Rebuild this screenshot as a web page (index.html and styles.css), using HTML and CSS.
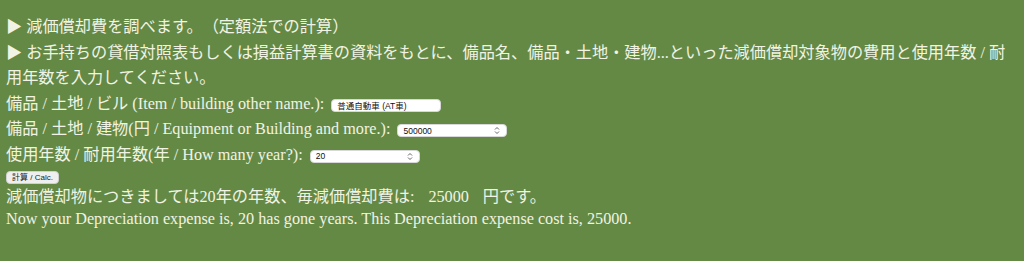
FILE: index.html
```html
<html lang="ja">
<head>
    <meta charset="UTF-8">
    <meta name="viewport" content="width=device-width, initial-scale=1.0">
    <title>減価償却費の計算</title>
    <link rel="stylesheet" href="styles.css">
</head>
<body>
    <div class="page">
        <p class="lead">▶ 減価償却費を調べます。（定額法での計算）</p>
        <p class="lead">▶ お手持ちの貸借対照表もしくは損益計算書の資料をもとに、備品名、備品・土地・建物...といった減価償却対象物の費用と使用年数 / 耐用年数を入力してください。</p>

        <div class="field">
            <label for="name">備品 / 土地 / ビル (Item / building other name.):</label>
            <input id="name" class="box" type="text" value="普通自動車 (AT車)">
        </div>
        <div class="field">
            <label for="cost">備品 / 土地 / 建物(円 / Equipment or Building and more.):</label>
            <span class="spin">
                <input id="cost" class="box" type="text" value="500000">
                <svg class="arrows" width="6" height="9" viewBox="0 0 6 9"><path d="M1 3.5 L3 1.5 L5 3.5 M1 5.5 L3 7.5 L5 5.5" fill="none" stroke="#666" stroke-width="1"/></svg>
            </span>
        </div>
        <div class="field">
            <label for="years">使用年数 / 耐用年数(年 / How many year?):</label>
            <span class="spin">
                <input id="years" class="box" type="text" value="20">
                <svg class="arrows" width="6" height="9" viewBox="0 0 6 9"><path d="M1 3.5 L3 1.5 L5 3.5 M1 5.5 L3 7.5 L5 5.5" fill="none" stroke="#666" stroke-width="1"/></svg>
            </span>
        </div>

        <button id="calc" class="calc">計算 / Calc.</button>

        <p class="result">減価償却物につきましては<span id="y1">20</span>年の年数、毎減価償却費は:<span id="amount" class="amount">25000</span>円です。</p>
        <p class="result-en">Now your Depreciation expense is, <span id="y2">20</span> has gone years. This Depreciation expense cost is, <span id="amount2">25000</span>.</p>
    </div>
    <script>
        const calcButton = document.getElementById('calc');

        calcButton.addEventListener('click', () => {
            const cost = parseFloat(document.getElementById('cost').value) || 0;
            const years = parseFloat(document.getElementById('years').value) || 1;
            const result = Math.round(cost / years);
            document.getElementById('y1').textContent = years;
            document.getElementById('y2').textContent = years;
            document.getElementById('amount').textContent = result;
            document.getElementById('amount2').textContent = result;
        });
    </script>
</body>
</html>
```

FILE: styles.css
```css
body {
    margin: 0;
    background-color: #648944;
    color: #f1f3e4;
    font-family: "Liberation Serif", "Noto Sans CJK JP", serif;
    font-size: 16.2px;
    text-spacing-trim: space-all;
}

.page {
    padding: 15px 8px 0 6px;
}

p {
    margin: 0;
}

.lead,
.field {
    line-height: 25.6px;
}

.box {
    vertical-align: middle;
    box-sizing: border-box;
    width: 110px;
    height: 13px;
    margin-left: 3px;
    padding: 0 5px;
    border: 1px solid #d8d8d8;
    border-radius: 4px;
    background-color: #fff;
    color: #111;
    font-family: "Liberation Sans", "Noto Sans CJK JP", sans-serif;
    font-size: 8.5px;
    outline: none;
}

.spin {
    position: relative;
    display: inline-block;
    vertical-align: middle;
    line-height: 0;
}

.arrows {
    position: absolute;
    right: 7px;
    top: 2px;
}

.calc {
    display: block;
    margin-top: 2px;
    height: 13px;
    padding: 0 5px;
    border: 1px solid #d0d0d0;
    border-radius: 4px;
    background-color: #efefef;
    color: #222;
    font-family: "Liberation Sans", "Noto Sans CJK JP", sans-serif;
    font-size: 8px;
    line-height: 11px;
    cursor: pointer;
}

.result {
    margin-top: 1px;
    line-height: 24px;
}

.amount {
    margin: 0 14px;
}

.result-en {
    line-height: 20px;
}
```
